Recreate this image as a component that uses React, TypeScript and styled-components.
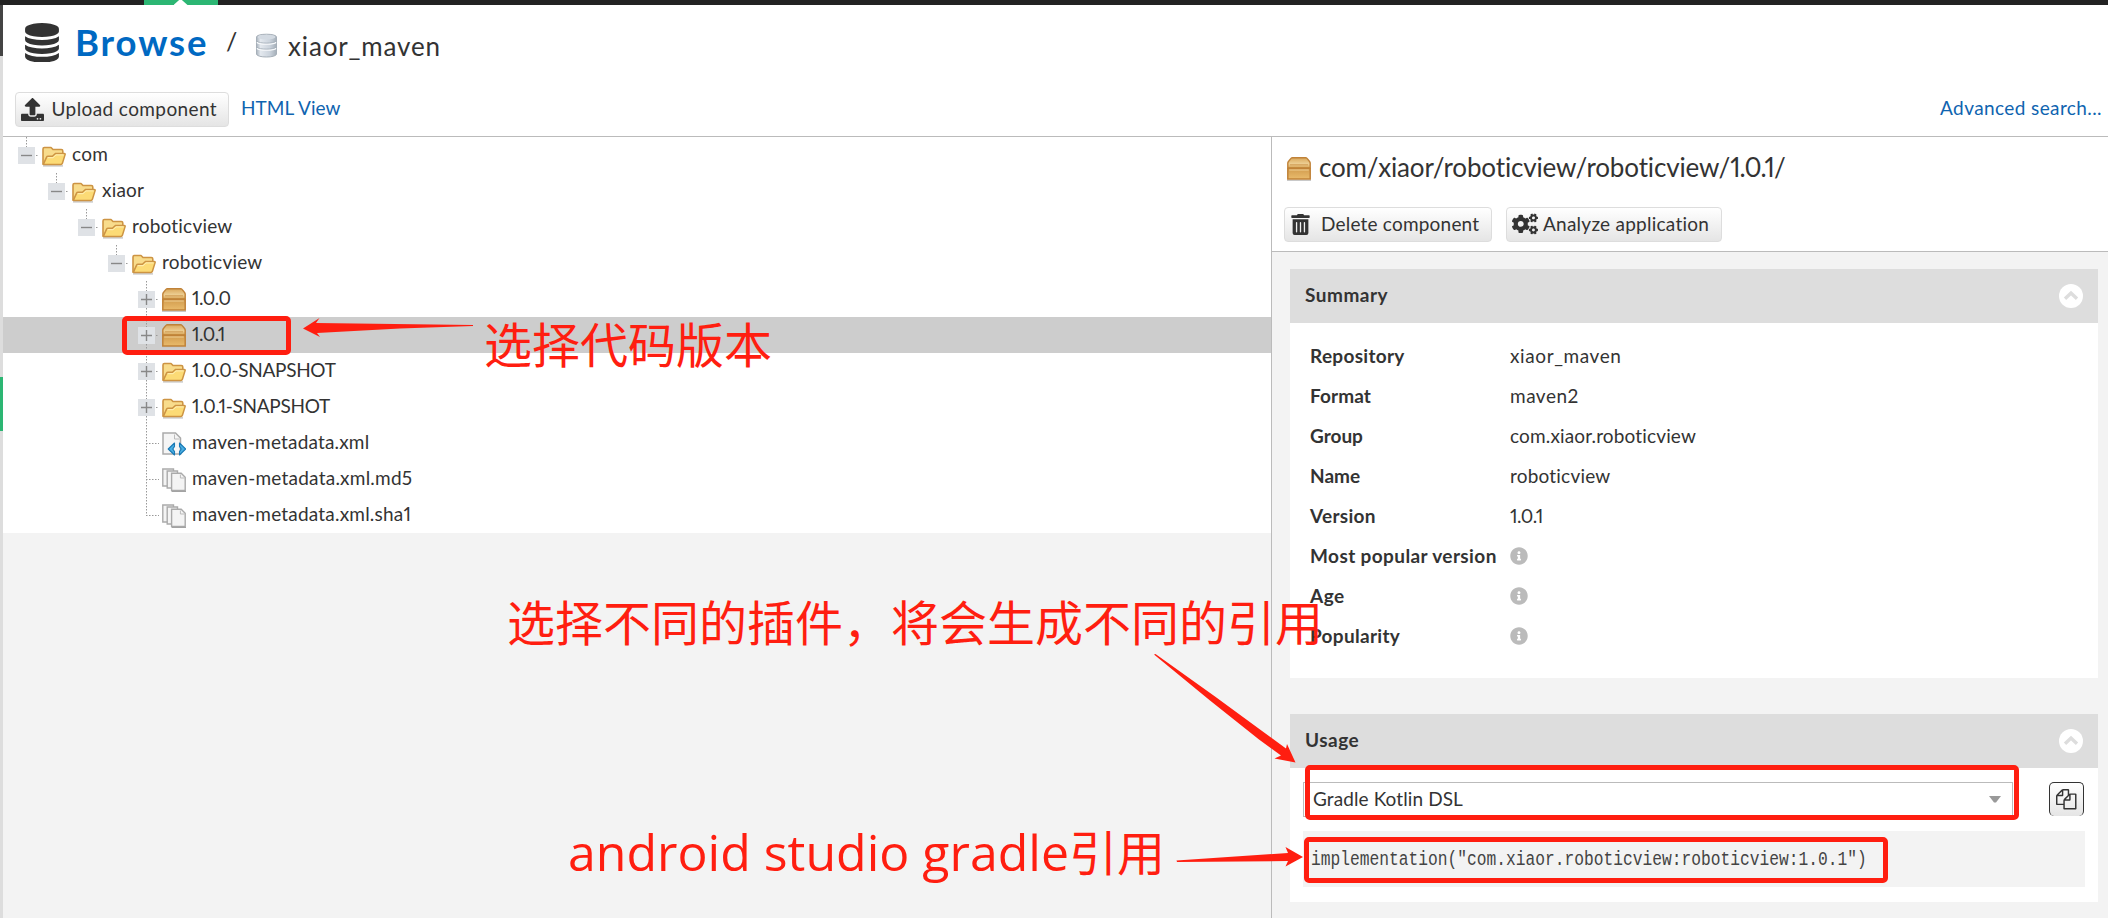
import React from 'react';
import styled, { createGlobalStyle, css } from 'styled-components';
import { FaUpload, FaTrashAlt, FaCogs, FaInfoCircle } from 'react-icons/fa';

const GlobalStyle = createGlobalStyle`
  * { box-sizing: border-box; }
  body {
    margin: 0;
    background: #f3f3f3;
    color: #333;
    font: 400 19px/24px Lato, "Open Sans", sans-serif;
    font-variant-ligatures: none;
    font-variant-numeric: proportional-nums;
    overflow: hidden;
  }
`;

const RED = '#ff1e10';
const LINE = '#bbb';

const Page = styled.div`
  position: relative;
  display: flex;
  flex-direction: column;
  width: 2108px;
  height: 918px;
  overflow: hidden;
`;

const TopBar = styled.div`
  flex: none;
  height: 5px;
  padding-left: 144px;
  background: #222;
`;

const ActiveTab = styled.div`
  display: flex;
  justify-content: center;
  width: 74px;
  height: 5px;
  background: #2cb673;
`;

const TabNotch = styled.div`
  width: 14px;
  height: 5px;
  margin-right: 1px;
  background: #fff;
  clip-path: polygon(40% 0, 60% 0, 100% 100%, 0 100%);
`;

const Shell = styled.div`
  display: flex;
  flex: 1;
  min-height: 0;
`;

const Rail = styled.div`
  display: flex;
  flex-direction: column;
  flex: none;
  width: 3px;
  background: #ddd;
`;

const RailPart = styled.div<{ $h: number; $color: string }>`
  height: ${(p) => p.$h}px;
  background: ${(p) => p.$color};
`;

const Main = styled.main`
  display: flex;
  flex: 1;
  flex-direction: column;
  min-width: 0;
`;

const Header = styled.header`
  display: flex;
  align-items: center;
  flex: none;
  height: 75px;
  padding-left: 22px;
  background: #fff;
`;

const Text = styled.span<{ $track?: number }>`
  letter-spacing: ${(p) => p.$track ?? 0}px;
  white-space: pre;
`;

const Heading = styled.h1`
  width: 151px;
  margin: 0 0 0 16px;
  padding-bottom: 2px;
  color: #0069c2;
  font-size: 36.5px;
  font-weight: 700;
  line-height: 42px;
  letter-spacing: 1.9px;
`;

const Slash = styled.span`
  width: 28px;
  padding-bottom: 3px;
  font-size: 25px;
  line-height: 30px;
`;

const RepoIconSlot = styled.span`
  display: flex;
  width: 23px;
  margin-left: 1px;
  padding-top: 6px;
`;

const RepoName = styled.span`
  padding-top: 7px;
  margin-left: 10px;
  font-size: 26px;
  line-height: 32px;
  letter-spacing: 0.85px;
`;

const Toolbar = styled.div`
  display: flex;
  align-items: center;
  flex: none;
  height: 57px;
  padding: 3px 6px 0 12px;
  border-bottom: 1px solid ${LINE};
  background: #fff;
`;

const Button = styled.button<{ $w: number }>`
  display: flex;
  align-items: center;
  width: ${(p) => p.$w}px;
  height: 35px;
  padding: 0 0 1px 5px;
  border: 1px solid #ddd;
  border-radius: 4px;
  background: linear-gradient(#fff, #e5e5e5);
  color: #333;
  font: inherit;
`;

const IconSlot = styled.span<{ $w: number }>`
  display: flex;
  flex: none;
  width: ${(p) => p.$w}px;
`;

const Link = styled.a<{ $track: number; $push?: boolean }>`
  margin-left: ${(p) => (p.$push ? 'auto' : '12px')};
  padding-bottom: 3px;
  color: #0f64b0;
  letter-spacing: ${(p) => p.$track}px;
`;

const Columns = styled.div`
  display: flex;
  flex: 1;
  min-height: 0;
`;

const TreePane = styled.section`
  width: 1268px;
`;

const TreeRow = styled.div<{ $depth: number; $selected?: boolean }>`
  display: flex;
  height: 36px;
  padding-left: ${(p) => 15 + p.$depth * 30}px;
  background: ${(p) => (p.$selected ? '#cdcdcd' : '#fff')};
`;

const TreeIcon = styled.span`
  display: flex;
  width: 24px;
  height: 36px;
  padding-top: 7px;
`;

const TreeLabel = styled.span<{ $track: number }>`
  padding: 5px 0 0 6px;
  letter-spacing: ${(p) => p.$track}px;
  white-space: nowrap;
`;

const DetailPane = styled.section`
  display: flex;
  flex: 1;
  flex-direction: column;
  border-left: 1px solid ${LINE};
`;

const DetailHead = styled.div`
  flex: none;
  height: 115px;
  padding: 16px 0 0 12px;
  border-bottom: 1px solid ${LINE};
  background: #fff;
`;

const DetailTitle = styled.h2`
  display: flex;
  align-items: center;
  gap: 8px;
  height: 32px;
  margin: 0 0 22px;
  padding-left: 3px;
  font-size: 26px;
  font-weight: 400;
  line-height: 32px;
`;

const TitleText = styled.span`
  padding-bottom: 4px;
`;

const ButtonRow = styled.div`
  display: flex;
  gap: 14px;
`;

const Cards = styled.div`
  display: flex;
  flex-direction: column;
  gap: 36px;
  padding: 17px 10px 0 18px;
`;

const Card = styled.article`
  background: #fff;
`;

const CardHead = styled.div`
  display: flex;
  align-items: center;
  justify-content: space-between;
  height: 54px;
  padding: 0 15px;
  background: #ddd;
  font-weight: 700;
`;

const CardTitle = styled.span`
  padding-bottom: 2px;
  letter-spacing: 0.5px;
`;

const PropertyList = styled.div`
  height: 355px;
  padding: 13px 0 0 20px;
`;

const PropertyRow = styled.div`
  display: flex;
  align-items: center;
  height: 40px;
`;

const PropertyName = styled.span<{ $track: number }>`
  width: 200px;
  font-weight: 700;
  letter-spacing: ${(p) => p.$track}px;
`;

const UsageBody = styled.div`
  height: 134px;
  padding: 14px 13px 0;
`;

const UsageControls = styled.div`
  display: flex;
  justify-content: space-between;
  padding-right: 1px;
`;

const Select = styled.div`
  display: flex;
  align-items: center;
  justify-content: space-between;
  width: 710px;
  height: 35px;
  padding: 0 11px 1px 9px;
  border: 1px solid ${LINE};
`;

const CopyButton = styled.button`
  display: flex;
  align-items: center;
  justify-content: center;
  width: 35px;
  height: 34px;
  padding: 0;
  border: 1px solid #333;
  border-bottom: 0;
  border-radius: 5px;
  background: linear-gradient(#fff, #e5e5e5);
`;

const CodeBox = styled.div`
  height: 56px;
  margin-top: 14px;
  padding: 15px 0 0 8px;
  overflow: hidden;
  background: #f3f3f3;
`;

const Code = styled.code`
  display: inline-block;
  transform: scaleX(0.8125);
  transform-origin: 0 50%;
  color: #444;
  font: 20px/24px "Liberation Mono", monospace;
  white-space: nowrap;
`;

const Overlay = styled.div`
  position: absolute;
  inset: 0;
  pointer-events: none;
`;

const overlaid = css<{ $x: number; $y: number }>`
  position: absolute;
  left: ${(p) => p.$x}px;
  top: ${(p) => p.$y}px;
`;

const Frame = styled.div<{ $x: number; $y: number; $w: number; $h: number }>`
  ${overlaid}
  width: ${(p) => p.$w}px;
  height: ${(p) => p.$h}px;
  border: 5px solid ${RED};
  border-radius: 5px;
`;

const Note = styled.div<{ $x: number; $y: number }>`
  ${overlaid}
  color: ${RED};
  font: 400 50px/64px "Open Sans", "Noto Sans CJK SC", sans-serif;
  white-space: nowrap;
`;

const ChineseText = styled.span`
  font-family: "Noto Sans CJK SC", sans-serif;
  font-size: 48px;
`;

const ArrowLayer = styled.svg`
  position: absolute;
  inset: 0;
`;

const DatabaseIcon = () => (
  <svg width="34" height="39.5" viewBox="0 0 1536 1792" fill="#333">
    <path d="M768 768q237 0 443-43t325-127v170q0 69-103 128t-280 93.5-385 34.5-385-34.5-280-93.5-103-128v-170q119 84 325 127t443 43zm0 768q237 0 443-43t325-127v170q0 69-103 128t-280 93.5-385 34.5-385-34.5-280-93.5-103-128v-170q119 84 325 127t443 43zm0-384q237 0 443-43t325-127v170q0 69-103 128t-280 93.5-385 34.5-385-34.5-280-93.5-103-128v-170q119 84 325 127t443 43zm0-1152q208 0 385 34.5t280 93.5 103 128v128q0 69-103 128t-280 93.5-385 34.5-385-34.5-280-93.5-103-128v-128q0-69 103-128t280-93.5 385-34.5z" />
  </svg>
);

const RepositoryIcon = () => (
  <svg width="23" height="25" viewBox="0 0 23 25">
    <defs>
      <linearGradient id="silver">
        <stop offset="0" stopColor="#a9b3bd" />
        <stop offset="0.2" stopColor="#e3e8ee" />
        <stop offset="0.65" stopColor="#ccd4dd" />
        <stop offset="1" stopColor="#a5afb9" />
      </linearGradient>
    </defs>
    <path d="M1.5 4C1.5 0.3 21.5 0.3 21.5 4V21C21.5 25 1.5 25 1.5 21Z" fill="url(#silver)" stroke="#a6afb8" />
    <ellipse cx="11.5" cy="4" rx="9" ry="2.3" fill="#d3dae2" />
    <path d="M2 9.2C4 11.7 19 11.7 21 9.2M2 15.2C4 17.7 19 17.7 21 15.2" fill="none" stroke="#f7f9fb" strokeWidth="1.4" />
    <path d="M2 8.2C4 10.7 19 10.7 21 8.2M2 14.2C4 16.7 19 16.7 21 14.2" fill="none" stroke="#a4aeb9" strokeWidth="0.8" />
  </svg>
);

const FolderIcon = () => (
  <svg width="24" height="24" viewBox="0 -2.3 24 24">
    <path d="M1 19.6H21" stroke="#bbb" strokeWidth="1.2" />
    <path d="M1 18V2.6Q1 1.2 2.4 1.2H9L11 3.2H19.3Q20.8 3.2 20.8 4.7V8L18 18Z" fill="#f8dc8c" stroke="#cd9443" strokeWidth="1.6" strokeLinejoin="round" />
    <path d="M1.4 17.8L4.6 10.8Q5 10 6 10H10.4L13.4 7.2H22.2Q23.4 7.2 23.1 8.3L20.4 17Q20 18.3 18.8 18.3H1.8Z" fill="#fcdb76" stroke="#cd9443" strokeWidth="1.5" strokeLinejoin="round" />
    <path d="M5.6 11.4H11L14 8.6H21.6" fill="none" stroke="#fff0b8" strokeWidth="1" />
  </svg>
);

const PackageIcon = () => (
  <svg width="24" height="24" viewBox="0 0 24 24">
    <defs>
      <linearGradient id="boxLid" x2="0" y2="1">
        <stop offset="0" stopColor="#d9a85c" />
        <stop offset="0.6" stopColor="#edcf94" />
        <stop offset="1" stopColor="#d7a354" />
      </linearGradient>
      <linearGradient id="boxFront" x2="0" y2="1">
        <stop offset="0" stopColor="#d29c4e" />
        <stop offset="1" stopColor="#e9bb6c" />
      </linearGradient>
    </defs>
    <path d="M0 23.3H24" stroke="#c9c9c9" strokeWidth="1.4" />
    <path d="M.8 11V6Q1 4.9 2 3.8L4 1.4Q4.5.8 5.4.8H18.6Q19.5.8 20 1.4L22 3.8Q23 4.9 23.2 6V11Z" fill="url(#boxLid)" stroke="#c08238" strokeWidth="1.4" />
    <path d="M.8 11.5H23.2V22H.8Z" fill="url(#boxFront)" stroke="#c08238" strokeWidth="1.5" />
    <path d="M2.2 13H21.8" stroke="#efcf94" strokeWidth="1" />
    <path d="M3 7.8H21" stroke="#c99247" strokeWidth="0.8" />
  </svg>
);

const XmlFileIcon = () => (
  <svg width="24" height="24" viewBox="0 0 24 24">
    <path d="M1 1H13.5L18.5 6V22H1Z" fill="#f5f5f5" stroke="#aaa" strokeWidth="1.5" />
    <path d="M12.5 2.5V7H17.5" fill="none" stroke="#bbb" />
    <path d="M12.5 11L6.2 17L12.5 23V19.6L10.8 17L12.5 14.4ZM17.5 11L23.8 17L17.5 23V19.6L19.2 17L17.5 14.4Z" fill="#4aaee2" stroke="#1878b4" strokeWidth="1.1" strokeLinejoin="round" />
  </svg>
);

const FilesIcon = () => (
  <svg width="24" height="24" viewBox="0 0 24 24">
    <g fill="#f4f4f4" stroke="#aaa" strokeWidth="1.4">
      <path d="M.8 1H11.5V18H.8Z" />
      <path d="M5.2 3H15.5V20H5.2Z" />
      <path d="M9.6 5.2H19.2L23.2 9.2V22.4H9.6Z" />
    </g>
    <path d="M18.4 6.5V10H22.5" fill="none" stroke="#bbb" />
    <path d="M9.5 23.4H24" stroke="#999" />
  </svg>
);

const FilesOutlineIcon = () => (
  <svg width="20.5" height="20.5" viewBox="0 0 1792 1792" fill="#333">
    <path d="M1696 384q40 0 68 28t28 68v1216q0 40-28 68t-68 28h-960q-40 0-68-28t-28-68v-288h-544q-40 0-68-28t-28-68v-672q0-40 20-88t48-76l408-408q28-28 76-48t88-20h416q40 0 68 28t28 68v328q68-40 128-40h416zm-544 213l-299 299h299v-299zm-640-384l-299 299h299v-299zm196 647l316-316v-416h-384v416q0 40-28 68t-68 28h-416v640h512v-256q0-40 20-88t48-76zm956 804v-1152h-384v416q0 40-28 68t-68 28h-416v640h896z" />
  </svg>
);

const CollapseIcon = () => (
  <svg width="24" height="24" viewBox="0 0 24 24">
    <circle cx="12" cy="12" r="12" fill="#fff" />
    <path d="M6 14.8L12 9L18 14.8" fill="none" stroke="#ddd" strokeWidth="3.4" />
  </svg>
);

type Branch = 'open' | 'closed' | 'leaf' | 'last';

/* Connector cell: dotted guide lines plus the expander box of one tree row. */
const BranchIcon = ({ kind }: { kind: Branch }) => {
  const boxed = kind === 'open' || kind === 'closed';
  return (
    <svg width="24" height="36" viewBox="0 0 24 36">
      <path
        d={`M8.5 0V${kind === 'open' ? 10 : kind === 'last' ? 18 : 36}M${boxed ? 18 : 8} 18.5H21`}
        stroke="#999"
        strokeDasharray="1.5 1.5"
        fill="none"
      />
      {boxed && <rect y="10" width="17" height="17" fill="#dfe2e6" />}
      {boxed && <path d={`M3 18.5H14${kind === 'closed' ? 'M8.5 13V24' : ''}`} stroke="#888" strokeWidth="1.4" />}
    </svg>
  );
};

const icons = { folder: FolderIcon, pack: PackageIcon, xml: XmlFileIcon, files: FilesIcon };

const tree: { label: string; depth: number; branch: Branch; icon: keyof typeof icons; track: number; selected?: boolean }[] = [
  { label: 'com', depth: 0, branch: 'open', icon: 'folder', track: 0.3 },
  { label: 'xiaor', depth: 1, branch: 'open', icon: 'folder', track: 0.2 },
  { label: 'roboticview', depth: 2, branch: 'open', icon: 'folder', track: 0.2 },
  { label: 'roboticview', depth: 3, branch: 'open', icon: 'folder', track: 0.2 },
  { label: '1.0.0', depth: 4, branch: 'closed', icon: 'pack', track: -0.5 },
  { label: '1.0.1', depth: 4, branch: 'closed', icon: 'pack', track: -0.5, selected: true },
  { label: '1.0.0-SNAPSHOT', depth: 4, branch: 'closed', icon: 'folder', track: -0.3 },
  { label: '1.0.1-SNAPSHOT', depth: 4, branch: 'closed', icon: 'folder', track: -0.3 },
  { label: 'maven-metadata.xml', depth: 4, branch: 'leaf', icon: 'xml', track: 0.17 },
  { label: 'maven-metadata.xml.md5', depth: 4, branch: 'leaf', icon: 'files', track: 0.23 },
  { label: 'maven-metadata.xml.sha1', depth: 4, branch: 'last', icon: 'files', track: 0.2 },
];

const properties: { name: string; track: number; value?: string; valueTrack?: number }[] = [
  { name: 'Repository', track: 0.3, value: 'xiaor_maven', valueTrack: 0.6 },
  { name: 'Format', track: 0.1, value: 'maven2', valueTrack: 0.5 },
  { name: 'Group', track: 0, value: 'com.xiaor.roboticview', valueTrack: 0.15 },
  { name: 'Name', track: 0, value: 'roboticview', valueTrack: 0.2 },
  { name: 'Version', track: 0.3, value: '1.0.1', valueTrack: -0.5 },
  { name: 'Most popular version', track: 0.4 },
  { name: 'Age', track: 0.5 },
  { name: 'Popularity', track: 0.3 },
];

export default function App() {
  return (
    <Page>
      <GlobalStyle />
      <TopBar>
        <ActiveTab>
          <TabNotch />
        </ActiveTab>
      </TopBar>
      <Shell>
        <Rail>
          <RailPart $h={51} $color="#444" />
          <RailPart $h={321} $color="#ddd" />
          <RailPart $h={54} $color="#2cb673" />
        </Rail>
        <Main>
          <Header>
            <DatabaseIcon />
            <Heading>Browse</Heading>
            <Slash>/</Slash>
            <RepoIconSlot>
              <RepositoryIcon />
            </RepoIconSlot>
            <RepoName>xiaor_maven</RepoName>
          </Header>
          <Toolbar>
            <Button $w={214}>
              <IconSlot $w={30.5}>
                <FaUpload size={23} />
              </IconSlot>
              <Text $track={0.4}>Upload component</Text>
            </Button>
            <Link $track={0.05}>HTML View</Link>
            <Link $track={0.4} $push>
              Advanced search...
            </Link>
          </Toolbar>
          <Columns>
            <TreePane>
              {tree.map((node, i) => {
                const Icon = icons[node.icon];
                return (
                  <TreeRow key={i} $depth={node.depth} $selected={node.selected}>
                    <BranchIcon kind={node.branch} />
                    <TreeIcon>
                      <Icon />
                    </TreeIcon>
                    <TreeLabel $track={node.track}>{node.label}</TreeLabel>
                  </TreeRow>
                );
              })}
            </TreePane>
            <DetailPane>
              <DetailHead>
                <DetailTitle>
                  <PackageIcon />
                  <TitleText>
                    <Text $track={-0.15}>com/xiaor/roboticview/roboticview/</Text>
                    <Text $track={-0.9}>1.0.1/</Text>
                  </TitleText>
                </DetailTitle>
                <ButtonRow>
                  <Button $w={208}>
                    <IconSlot $w={31}>
                      <FaTrashAlt size={21} />
                    </IconSlot>
                    <Text $track={0.2}>Delete component</Text>
                  </Button>
                  <Button $w={216}>
                    <IconSlot $w={31}>
                      <FaCogs size={26} />
                    </IconSlot>
                    <Text $track={0.25}>Analyze application</Text>
                  </Button>
                </ButtonRow>
              </DetailHead>
              <Cards>
                <Card>
                  <CardHead>
                    <CardTitle>Summary</CardTitle>
                    <CollapseIcon />
                  </CardHead>
                  <PropertyList>
                    {properties.map((p) => (
                      <PropertyRow key={p.name}>
                        <PropertyName $track={p.track}>{p.name}</PropertyName>
                        {p.value ? <Text $track={p.valueTrack}>{p.value}</Text> : <FaInfoCircle size={18} color="#bbb" />}
                      </PropertyRow>
                    ))}
                  </PropertyList>
                </Card>
                <Card>
                  <CardHead>
                    <CardTitle>Usage</CardTitle>
                    <CollapseIcon />
                  </CardHead>
                  <UsageBody>
                    <UsageControls>
                      <Select>
                        <Text $track={0.1}>Gradle Kotlin DSL</Text>
                        <svg width="12" height="7" viewBox="0 0 12 7">
                          <path d="M0 0H12L7 6.5H5Z" fill="#999" />
                        </svg>
                      </Select>
                      <CopyButton>
                        <FilesOutlineIcon />
                      </CopyButton>
                    </UsageControls>
                    <CodeBox>
                      <Code>implementation("com.xiaor.roboticview:roboticview:1.0.1")</Code>
                    </CodeBox>
                  </UsageBody>
                </Card>
              </Cards>
            </DetailPane>
          </Columns>
        </Main>
      </Shell>
      <Overlay>
        <Frame $x={122} $y={316} $w={169} $h={39} />
        <Frame $x={1305} $y={765} $w={714} $h={55} />
        <Frame $x={1304} $y={837} $w={584} $h={46} />
        <Note $x={484} $y={310}>
          <ChineseText>选择代码版本</ChineseText>
        </Note>
        <Note $x={507} $y={588}>
          <ChineseText>选择不同的插件，将会生成不同的引用</ChineseText>
        </Note>
        <Note $x={568} $y={818}>
          android studio gradle<ChineseText>引用</ChineseText>
        </Note>
        <ArrowLayer width="2108" height="918" viewBox="0 0 2108 918" fill={RED}>
          <path d="M303 328.5L319.5 318L316 323L473 325L473 326L400 328.5L317 333L320 337Z" />
          <path d="M1154 654.5L1155.5 654L1215 696.5L1260 729.5L1286 748.5L1287 744L1295.5 762.5L1274.5 758.5L1281 755.5L1259 739.5L1210 700.5Z" />
          <path d="M1176.5 860.5L1288 853L1285.5 847L1303 857L1285.5 866.5L1288 861L1177 862Z" />
        </ArrowLayer>
      </Overlay>
    </Page>
  );
}
